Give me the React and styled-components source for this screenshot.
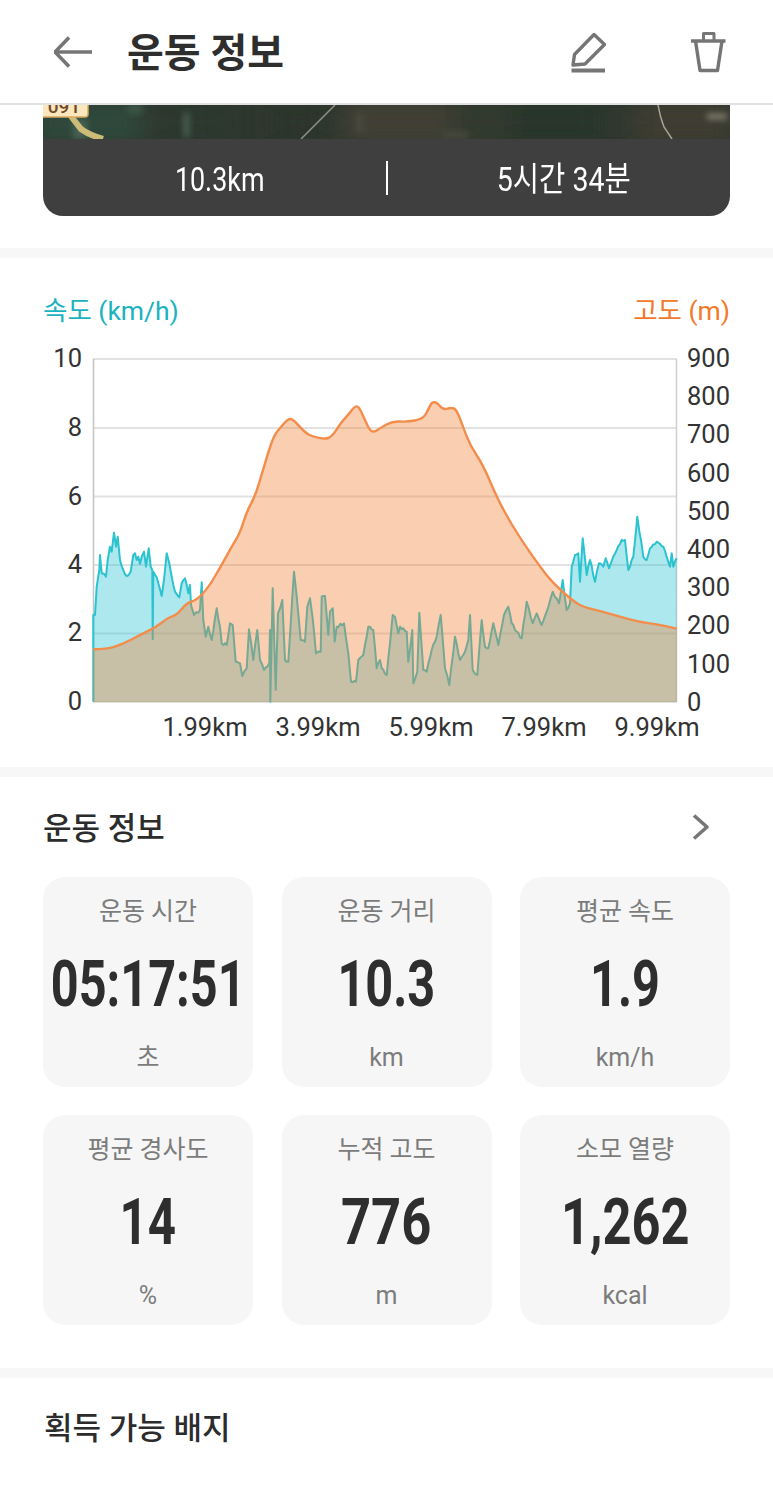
import React from 'react';
import styled, { createGlobalStyle } from 'styled-components';

const Global = createGlobalStyle`
  html, body { margin: 0; padding: 0; background: #fff; }
  body { font-family: Roboto, "Noto Sans CJK KR", sans-serif; width: 773px; }
`;

const KR = `Roboto, "Noto Sans CJK KR", sans-serif`;

const Page = styled.div`width: 773px; background: #fff; display: flex; flex-direction: column;`;
const Header = styled.header`
  height: 103px; border-bottom: 2px solid #e2e2e2; display: flex; align-items: center;
  padding: 0 47px 0 54px; background: #fff;
`;
const Title = styled.h1`
  margin: 5px 0 0 35px; flex: 1; font: 700 40px/1 ${KR}; color: #2e2e2e;
`;
const IconBtn = styled.button`
  border: 0; background: none; padding: 0; display: flex; margin-left: ${p => p.$gap || 0}px;
`;
const MapCard = styled.section`margin: 0 43px 32px; display: flex; flex-direction: column;`;
const MapStrip = styled.svg`display: block; width: 687px; height: 34px;`;
const StatBar = styled.div`
  height: 77px; background: #3f3f3f; border-radius: 0 0 20px 20px; display: flex; align-items: center;
`;
const StatCell = styled.div`flex: 1; padding: 3px 0 0 10px; text-align: center; color: #fff;`;
const StatText = styled.span`
  display: inline-block; font: 400 34px/1 ${KR}; transform: scaleX(${p => p.$sx}); white-space: nowrap;
`;
const StatSep = styled.div`width: 2px; height: 34px; background: #fff;`;
const Divider = styled.div`height: 10px; background: #f7f7f7;`;
const ChartSection = styled.section`height: 509px; display: flex; flex-direction: column;`;
const Legend = styled.div`
  display: flex; justify-content: space-between; padding: 36px 43px 0; height: 33px;
  font: 400 26.5px/33px ${KR};
`;
const LegendItem = styled.span`color: ${p => p.$color};`;
const ChartSvg = styled.svg`display: block; width: 773px; height: 440px;`;
const InfoSection = styled.section`padding: 0 43px 43px;`;
const InfoHead = styled.div`
  height: 100px; display: flex; align-items: center; justify-content: space-between; padding-right: 20px;
`;
const SectionTitle = styled.h2`margin: 3px 0 0; font: 500 31px/1 ${KR}; color: #2c2c2c;`;
const Grid = styled.div`
  display: grid; grid-template-columns: repeat(3, 210px); grid-auto-rows: 210px; column-gap: 28.5px; row-gap: 28px;
`;
const Card = styled.div`
  background: #f6f6f6; border-radius: 22px; display: flex; flex-direction: column; align-items: center;
  justify-content: space-between; padding: 20px 0 14px;
`;
const CardLabel = styled.div`font: 400 25px/30px ${KR}; color: #7c7c7c;`;
const CardValue = styled.div`
  font: 700 64px/64px ${KR}; color: #2e2e2e; transform: scaleX(${p => p.$sx}); white-space: nowrap;
`;
const BadgeSection = styled.section`height: 122px; padding: 32px 44px 0; box-sizing: border-box;`;

const orange = [[93,649.3],[106.7,649.3],[123,644],[140,635],[156.7,626.7],[168,617.7],[176.7,615],[186.7,603],[196.7,600],[208,588],[220,568],[231.7,546.7],[240,533],[246.7,511.7],[255,496.7],[263,470],[273,436.7],[280,428],[288,419],[293,419],[305,432.7],[313,436.7],[325,439],[331.7,437],[341.7,421.7],[348,415],[355,406],[359,406.7],[365,420],[370,430.7],[375,432],[380,428],[393,421],[406.7,422],[423,419],[428,410],[431.7,402.3],[436.7,402.3],[443,410],[451.7,407.3],[456.7,410],[463,426.7],[470,445],[483,465],[495,493],[505,513],[520,538],[540,566.7],[553,583],[571.7,600],[583,607],[603,611.7],[636.7,621.7],[656.7,624],[676.7,628.7]];

const z2 = [[160,1085],[160,825],[165,825],[170,740],[178,690],[180,645],[185,700],[198,710],[203,660],[210,620],[215,635],[222,578],[228,620],[233,590],[240,660],[250,690],[260,708],[272,695],[280,645],[285,640],[290,660],[295,650],[300,672],[305,650],[312,635],[318,680],[326,625],[332,680],[337,690],[338,898],[340,695],[350,712],[358,740],[365,768],[372,720],[380,640],[388,670],[395,710],[405,755],[418,772],[425,730],[435,715],[445,760],[450,735],[453,795],[462,825],[480,810],[485,727],[490,840],[497,890],[505,860],[515,900],[530,805],[540,860],[545,910],[560,915],[570,850],[578,855],[587,965],[600,970],[607,1008],[620,985],[627,868],[640,960],[652,870],[660,960],[672,990],[688,970],[690,870],[691,1085],[698,745],[707,1050],[714,820],[727,780],[735,960],[745,965],[762,695],[770,770],[782,900],[795,905],[802,800],[810,775],[818,835],[828,940],[842,935],[845,770],[855,768],[865,885],[870,815],[878,805],[884,905],[890,860],[912,850],[925,940],[933,1025],[948,1025],[955,960],[970,945],[985,860],[1000,870],[1010,985],[1020,960]];
const z3 = [[5,985],[20,1005],[30,910],[38,825],[45,830],[55,880],[60,860],[80,875],[85,965],[97,870],[100,1030],[112,995],[118,818],[130,990],[140,995],[155,930],[170,890],[182,825],[195,985],[208,1035],[225,890],[240,960],[255,935],[265,900],[270,825],[278,990],[292,1005],[300,900],[305,840],[315,920],[325,925],[340,850],[355,915],[372,825],[385,800],[395,850],[410,875],[425,895],[440,785],[458,850],[470,820],[485,855],[500,815],[518,755],[537,790],[548,720],[560,810],[570,790],[575,680],[585,645],[595,640],[600,725],[608,595],[620,705],[630,660],[645,725],[657,670],[670,680],[677,655],[687,685],[700,650],[725,600],[735,600],[745,690],[760,650],[772,530],[790,650],[800,660],[810,625],[830,605],[850,620],[870,680],[875,640],[880,680],[890,655]];

const OY = 327; // svg top in page coordinates
const rawSpeed = [
  ...z2.map(([x, y]) => [40 + x / 3, 340 + y / 3]),
  ...z3.map(([x, y]) => [380 + x / 3, 340 + y / 3]),
];
// the recorded trace is jagged: subdivide long segments with a small repeatable wobble
const speed = rawSpeed.flatMap((p, i) => {
  const q = rawSpeed[i + 1];
  if (!q || q[0] - p[0] < 3) return [p];
  const n = Math.floor((q[0] - p[0]) / 1.6);
  const out = [p];
  for (let k = 1; k < n; k++) {
    const t = k / n;
    const w = Math.sin(i * 12.9 + k * 78.2) * 1.3;
    out.push([p[0] + (q[0] - p[0]) * t, p[1] + (q[1] - p[1]) * t + w]);
  }
  return out;
});
const toD = pts => pts.map(([x, y], i) => `${i ? 'L' : 'M'}${x.toFixed(1)} ${(y - OY).toFixed(1)}`).join(' ');
const smooth = pts => {
  let d = `M${pts[0][0]} ${(pts[0][1] - OY).toFixed(1)}`;
  for (let i = 1; i < pts.length - 1; i++) {
    const mx = (pts[i][0] + pts[i + 1][0]) / 2;
    const my = (pts[i][1] + pts[i + 1][1]) / 2;
    d += ` Q${pts[i][0]} ${(pts[i][1] - OY).toFixed(1)} ${mx.toFixed(1)} ${(my - OY).toFixed(1)}`;
  }
  const e = pts[pts.length - 1];
  return `${d} L${e[0]} ${(e[1] - OY).toFixed(1)}`;
};
const close = (d, pts) => `${d} L${pts[pts.length - 1][0]} ${702 - OY} L${pts[0][0]} ${702 - OY} Z`;

const gridY = [359, 428, 496.5, 565, 633.5, 702];
const leftLabels = [['10', 358], ['8', 427], ['6', 496], ['4', 564], ['2', 632], ['0', 701]];
const rightLabels = ['900', '800', '700', '600', '500', '400', '300', '200', '100', '0'];
const xLabels = [['1.99km', 205], ['3.99km', 318], ['5.99km', 431], ['7.99km', 544], ['9.99km', 657]];

const Chart = () => (
  <ChartSvg viewBox="0 0 773 440">
    {gridY.map(y => <line key={y} x1="93" x2="677" y1={y - OY} y2={y - OY} stroke="#e2e2e2" strokeWidth="2" />)}
    <line x1="93.5" x2="93.5" y1={359 - OY} y2={702 - OY} stroke="#c4c4c4" strokeWidth="1.5" />
    <line x1="676.5" x2="676.5" y1={359 - OY} y2={702 - OY} stroke="#d0d0d0" strokeWidth="1.5" />
    <path d={close(toD(speed), speed)} fill="rgb(40,195,210)" fillOpacity="0.38" />
    <path d={toD(speed)} fill="none" stroke="#2ac3cf" strokeWidth="2" strokeLinejoin="round" />
    <path d={close(smooth(orange), orange)} fill="rgb(242,125,50)" fillOpacity="0.38" />
    <path d={smooth(orange)} fill="none" stroke="#f28d4c" strokeWidth="2.4" strokeLinejoin="round" />
    <g fontFamily="Roboto, sans-serif" fontSize="25.5" fill="#333">
      {leftLabels.map(([t, y]) => <text key={t} x="82" y={y - OY + 9} textAnchor="end">{t}</text>)}
      {rightLabels.map((t, i) => <text key={t} x="687" y={358 + i * 38.2 - OY + 9}>{t}</text>)}
      {xLabels.map(([t, x]) => <text key={t} x={x} y={727 - OY + 9} textAnchor="middle">{t}</text>)}
    </g>
  </ChartSvg>
);

const MapArt = () => (
  <MapStrip viewBox="0 0 687 34" preserveAspectRatio="none">
    <defs>
      <filter id="b" x="-20%" y="-50%" width="140%" height="200%"><feGaussianBlur stdDeviation="12" /></filter>
      <filter id="s" x="-50%" y="-50%" width="200%" height="200%"><feGaussianBlur stdDeviation="3" /></filter>
      <clipPath id="c"><rect width="687" height="34" /></clipPath>
    </defs>
    <g clipPath="url(#c)">
      <rect width="687" height="34" fill="#2e372e" />
      <g filter="url(#b)">
        <rect x="-10" y="-5" width="110" height="45" fill="#2f4a3e" />
        <rect x="120" y="-5" width="60" height="45" fill="#29392f" />
        <rect x="230" y="-5" width="50" height="45" fill="#2b342b" />
        <rect x="300" y="-5" width="110" height="45" fill="#423f36" />
        <rect x="410" y="-5" width="60" height="45" fill="#333a2f" />
        <rect x="470" y="-5" width="90" height="45" fill="#25342a" />
        <rect x="590" y="-5" width="100" height="45" fill="#403e33" />
      </g>
      <g filter="url(#s)">
        <rect x="30" y="14" width="14" height="20" fill="#466255" />
        <rect x="141" y="8" width="5" height="24" fill="#4f6657" />
        <rect x="85" y="0" width="14" height="8" fill="#3f5a4c" />
        <rect x="314" y="8" width="5" height="20" fill="#4f4e43" />
        <rect x="664" y="9" width="20" height="5" fill="#8a8878" />
        <rect x="400" y="26" width="26" height="8" fill="#45463b" />
      </g>
      <path d="M27 10 L38 24 Q46 30 60 34" fill="none" stroke="#cdbb78" strokeWidth="6" />
      <path d="M292 0 L258 34" fill="none" stroke="#8d8f88" strokeWidth="1.5" />
      <path d="M615 0 Q617 12 621 22 L629 34" fill="none" stroke="#a3a49b" strokeWidth="1.5" />
      <rect x="-4" y="-8" width="49" height="20" rx="3" fill="#fbe6bd" stroke="#d9a95f" strokeWidth="1.5" />
      <text x="21" y="7.5" textAnchor="middle" fontFamily="Roboto, sans-serif" fontSize="19" fontWeight="500" fill="#6f4a2a">091</text>
    </g>
  </MapStrip>
);

const BackIcon = () => (
  <svg width="38" height="34" viewBox="2 0 38 34" fill="none" stroke="#757575" strokeWidth="3.6" strokeLinejoin="round">
    <path d="M40 17 H4" />
    <path d="M17 2.5 L3 17 L17 31.5" />
  </svg>
);
const PencilIcon = () => (
  <svg width="36" height="42" viewBox="570 30 36 42" fill="none" stroke="#757575" strokeWidth="3.4" strokeLinejoin="round">
    <path d="M573 64 L574.5 53.5 L594 33.5 L604.5 43.5 L585 63 Z" />
    <path d="M571.5 69.5 H605" strokeWidth="4" />
  </svg>
);
const TrashIcon = () => (
  <svg width="36" height="42" viewBox="690 31 36 42" fill="none" stroke="#757575" strokeWidth="3.4" strokeLinejoin="round">
    <path d="M691 41 H725.5" />
    <path d="M703.5 40 V33.5 H714 V40" strokeWidth="3" />
    <path d="M695.5 41 L700 70.5 H717.5 L722 41" />
  </svg>
);
const Chevron = () => (
  <svg width="18" height="28" viewBox="0 0 18 28" fill="none" stroke="#777" strokeWidth="3.6" strokeLinejoin="round">
    <path d="M2 2.5 L15 14 L2 25.5" />
  </svg>
);

const cards = [
  ['운동 시간', '05:17:51', '초', 0.76],
  ['운동 거리', '10.3', 'km', 0.76],
  ['평균 속도', '1.9', 'km/h', 0.76],
  ['평균 경사도', '14', '%', 0.77],
  ['누적 고도', '776', 'm', 0.82],
  ['소모 열량', '1,262', 'kcal', 0.79],
];

export default function App() {
  return (
    <Page>
      <Global />
      <Header>
        <IconBtn><BackIcon /></IconBtn>
        <Title>운동 정보</Title>
        <IconBtn><PencilIcon /></IconBtn>
        <IconBtn $gap={84}><TrashIcon /></IconBtn>
      </Header>
      <MapCard>
        <MapArt />
        <StatBar>
          <StatCell><StatText $sx={0.79}>10.3km</StatText></StatCell>
          <StatSep />
          <StatCell><StatText $sx={0.84}>5시간 34분</StatText></StatCell>
        </StatBar>
      </MapCard>
      <Divider />
      <ChartSection>
        <Legend>
          <LegendItem $color="#1bb3c0">속도 (km/h)</LegendItem>
          <LegendItem $color="#f0792a">고도 (m)</LegendItem>
        </Legend>
        <Chart />
      </ChartSection>
      <Divider />
      <InfoSection>
        <InfoHead>
          <SectionTitle>운동 정보</SectionTitle>
          <Chevron />
        </InfoHead>
        <Grid>
          {cards.map(([l, v, u, sx]) => (
            <Card key={l}>
              <CardLabel>{l}</CardLabel>
              <CardValue $sx={sx}>{v}</CardValue>
              <CardLabel>{u}</CardLabel>
            </Card>
          ))}
        </Grid>
      </InfoSection>
      <Divider />
      <BadgeSection>
        <SectionTitle>획득 가능 배지</SectionTitle>
      </BadgeSection>
    </Page>
  );
}
